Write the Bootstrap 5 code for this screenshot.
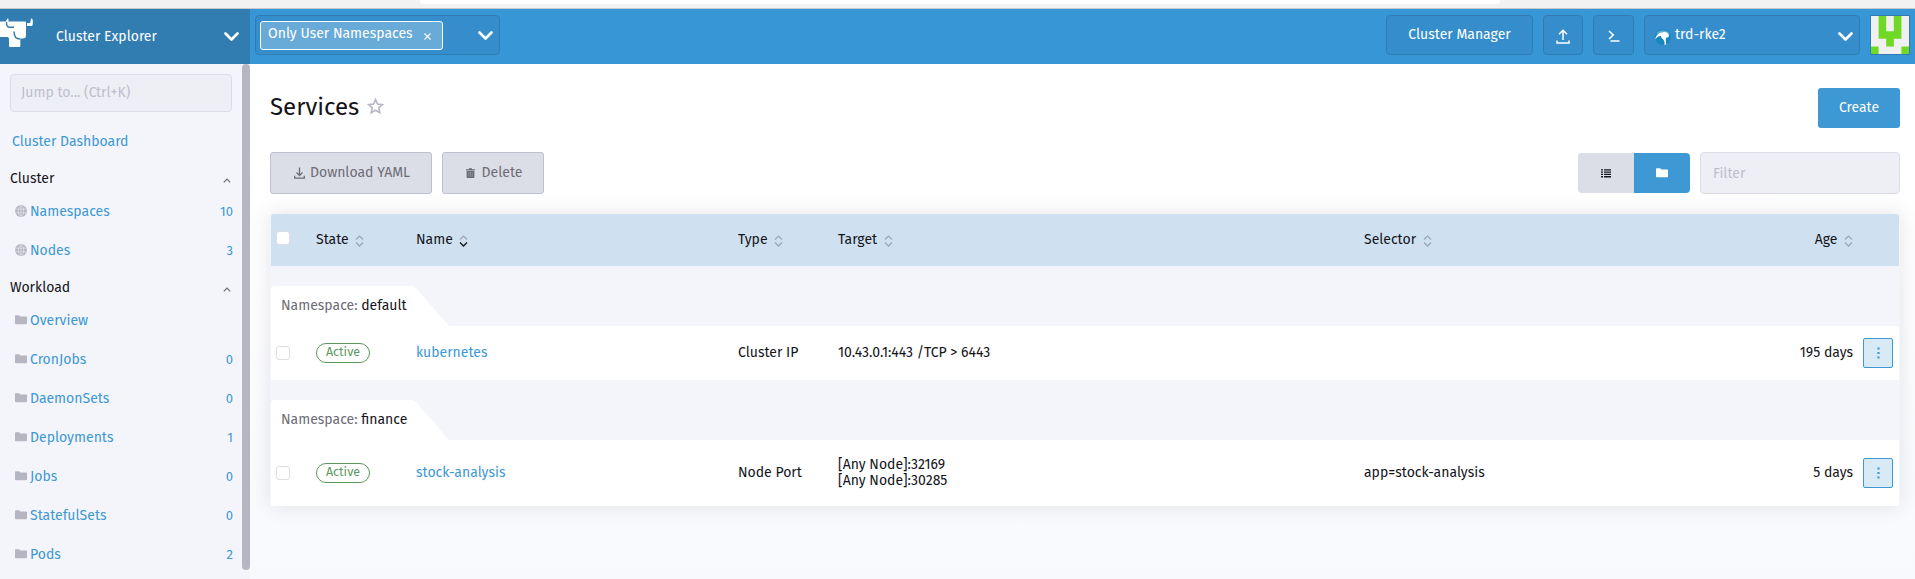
<!DOCTYPE html>
<html lang="en">
<head>
<meta charset="utf-8">
<title>Services</title>
<link href="https://cdn.jsdelivr.net/npm/bootstrap@5.3.0/dist/css/bootstrap.min.css" rel="stylesheet">
<style>
body{font:14px/1.2 "Fira Sans",Roboto,"Noto Sans",sans-serif;color:#141419;height:579px;overflow:hidden;background:#fff}
a{color:#3d98d3;text-decoration:none}
svg{display:block;flex:none}
.strip{height:9px;background:#f2f2f2;border-bottom:1px solid #c9c9cb;padding-left:420px}
.urlbar{width:1080px;height:4px;background:#fff;border-radius:0 0 3px 3px}
.topbar{height:55px;background:#3796d5;color:#fff}
.product{width:250px;background:#317db1;padding-right:11px}
.product span{margin-left:22px;padding-top:1px}
.brand{margin-top:-7px}
.hbox{height:40px;background:#358ecb;border:1px solid #317db1;border-radius:4px;color:#fff;margin-top:6px}
.drop{margin-top:2px}
.chip{height:29px;width:183px;background:#68aad8;border:1px solid #fff;border-radius:3px;padding:0 11px 2px 7px}
.side{width:242px;background:#f4f5fa;padding:10px 9px 0 10px}
.thumb{width:8px;height:506px;background:#b6b6c2;border-radius:4px}
.rail{background:#f4f5fa;width:8px}
.field,.field:focus{background:#eeeff4;border:1px solid #dcdee7;border-radius:4px;font-size:14px;box-shadow:none}
.field::placeholder{color:#bdbece}
.jump{width:222px;height:38px;padding:0 10px 1px}
.dash{height:31px;padding:4px 0 0 2px;margin-top:13px}
.group{height:34px;padding-right:2px}
.group svg{margin-top:3px}
.entries{margin-top:-4px}
.entry{height:39px;padding-left:5px;gap:3px}
.entry svg{margin-top:-1px}
.entry a{padding-top:2px}
.entry span{font-size:13px;color:#3d98d3}
.main{background:linear-gradient(#fff 20%,#f8f9fc);padding:24px 15px 0 20px}
h1{font-size:24px;font-weight:400;line-height:29px}
.btn{font-size:14px;line-height:1.2;border-radius:3px;padding:0}
.btn-create{width:82px;height:40px;background:#3d98d3;color:#fff}
.btn-bulk{height:42px;background:#dcdee7;border:1px solid #bec1d0;color:#6c6c76;gap:5px;padding-left:2px}
.view{width:56px;height:40px;background:#dcdee7}
.view.on{background:#3d98d3}
.view:first-child{border-radius:4px 0 0 4px}
.view:last-child{border-radius:0 4px 4px 0}
.filter{width:200px;height:42px;padding:0 12px}
.sheet{background:#f4f5fa;box-shadow:0 0 20px rgba(60,62,90,.13);margin-top:20px;padding:0 1px;border-radius:4px}
.grid{table-layout:fixed;width:1628px;border-collapse:separate;border-spacing:0}
.grid td,.grid th{padding:0;font-weight:400;vertical-align:middle}
.grid thead th{height:52px;background:#cfe1f0}
.grid thead th:first-child{border-top-left-radius:3px;padding-bottom:4px}
.grid thead th:last-child{border-top-right-radius:3px}
.grid thead div{gap:6.5px}
.item td{background:#fff}
.item td.multi{padding-bottom:1px;line-height:16px}
.r1 td{height:54px}.r2 td{height:66px}
.grp td{height:60px;padding-top:20px}
.tab{width:178px;height:40px;background:#fff;border-top-left-radius:4px;clip-path:polygon(0 0,142px 0,145px 2px,100% 100%,0 100%);padding-left:10px;color:#6c6c76}
.tab b{font-weight:400;color:#141419}
.check{width:14px;height:14px;border:1px solid #dcdee7;border-radius:3px;background:#fff;margin-left:5px}
.state{width:54px;height:20px;border:1px solid #5d995d;border-radius:10px;color:#5d995d;font-size:12.5px;line-height:16px;text-align:center}
.act{width:30px;height:30px;background:#d8eaf6;border:1px solid #3d98d3;border-radius:2px;margin-left:10px}
</style>
</head>
<body>
<svg class="d-none" xmlns="http://www.w3.org/2000/svg">
  <symbol id="chev" viewBox="0 0 15 10"><path d="M1.500 1.500l6 6 6-6" fill="none" stroke="#fff" stroke-width="2.600" stroke-linecap="round" stroke-linejoin="round"/></symbol>
  <symbol id="up" viewBox="0 0 8 5"><path d="M.8 4.300L4 1l3.200 3.300" fill="none" stroke="#6c6c76" stroke-width="1.200"/></symbol>
  <symbol id="folder" viewBox="0 0 12 10"><path d="M0 1a.8.8 0 0 1 .8-.8h3.400L5.400 1.500h5.800a.8.8 0 0 1 .8.800v6.200a.8.800 0 0 1-.8.800H.8A.8.800 0 0 1 0 8.500z" fill="currentColor"/></symbol>
  <symbol id="globe" viewBox="0 0 12 12"><circle cx="6" cy="6" r="5.900" fill="#b6b6c2"/><path d="M6 .8v10.400M1 4.200h10M1 7.800h10" stroke="#f4f5fa" stroke-width=".5"/><ellipse cx="6" cy="6" rx="2.700" ry="5.200" fill="none" stroke="#f4f5fa" stroke-width=".5"/></symbol>
  <symbol id="sort" viewBox="0 0 9 12"><path d="M1 4.500L4.500 1 8 4.500" fill="none" stroke="#98a7b5" stroke-width="1.100"/><path d="M1 7.500L4.500 11 8 7.500" fill="none" stroke="currentColor" stroke-width="1.300"/></symbol>
  <symbol id="dots" viewBox="0 0 3 12"><path d="M.4 .5h2.200v2H.4zM.4 5h2.200v2H.4zM.4 9.500h2.200v2H.4z" fill="#3d98d3"/></symbol>
</svg>

<div class="strip"><div class="urlbar"></div></div>
<header class="topbar d-flex">
  <div class="product d-flex align-items-center">
    <svg class="brand" width="34" height="31" viewBox="0 0 34 31"><path d="M0 3.500h6L7.300.5l1.200.3-.1 2.700H25a1 1 0 0 1 1 1v13c0 2-1 3-3 3h-2.700V28a1 1 0 0 1-1 1H10a1 1 0 0 1-1-1v-7.500l-1-1.500H0z" fill="#fff"/><path d="M6.500 4c0 4 .8 5.300 3 5.300h4.500M14 13.500c0 5 2 7.500 6 7.500" fill="none" stroke="#317db1" stroke-width="1.400"/><path d="M27 5h3.200L31 .5l1.300.2c.8 2.500.8 5-.1 7.300H27z" fill="#fff"/></svg>
    <span class="flex-grow-1">Cluster Explorer</span>
    <svg width="15" height="10"><use href="#chev"/></svg>
  </div>
  <div class="hbox d-flex align-items-center justify-content-between ps-1" style="width:245px;margin-left:5px;padding-right:6px">
    <div class="chip d-flex align-items-center justify-content-between"><span>Only User Namespaces</span><svg width="7" height="7" viewBox="0 0 7 7" class="mt-1"><path d="M.5.5l6 6m0-6l-6 6" stroke="#fff" stroke-width="1.100"/></svg></div>
    <svg class="drop" width="15" height="10"><use href="#chev"/></svg>
  </div>
  <div class="d-flex ms-auto" style="gap:10px;margin-right:5px">
    <div class="hbox d-flex align-items-center justify-content-center" style="width:147px;padding-top:1px">Cluster Manager</div>
    <div class="hbox d-flex align-items-center justify-content-center" style="width:40px"><svg class="drop" width="14" height="15" viewBox="0 0 14 15"><path d="M7 11V1.500M3 5.200l4-4 4 4M1 11.500V14h12v-2.500" fill="none" stroke="#fff" stroke-width="1.500"/></svg></div>
    <div class="hbox d-flex align-items-center justify-content-center" style="width:41px"><svg class="drop" width="12" height="12" viewBox="0 0 12 12"><path d="M1 1l4.200 4L1 9" fill="none" stroke="#fff" stroke-width="1.600"/><path d="M2.500 11h9" stroke="#fff" stroke-width="1.500"/></svg></div>
    <div class="hbox d-flex align-items-center" style="width:216px;padding:1px 6px 0 10px">
      <svg class="drop" width="16" height="16" viewBox="0 0 16 16"><circle cx="8" cy="8" r="8" fill="#1787bb"/><path d="M1 5.500a8 8 0 0 1 14 0L8 3z" fill="#5aaed5"/><path d="M.2 10.500C1 6 4.300 3.300 8 3.200c3.500-.6 6 1.600 5.900 4-.5 1.500-2.600 1-3.100 2.200-.4 1.500.7 3.800.3 6.100l-1.600.5c.5-3.500-.7-5.800-2.700-6.800L5.600 6.800C3.500 7.200 1.700 8.300.2 10.500z" fill="#fff"/></svg>
      <span class="flex-grow-1 ms-1">trd-rke2</span>
      <svg class="drop" width="15" height="10"><use href="#chev"/></svg>
    </div>
    <svg width="40" height="40" viewBox="0 0 40 40" style="margin-top:6px"><path d="M0 0h40v40H0z" fill="#317db1"/><path d="M1 1h38v38H1z" fill="#f0f0f0"/><path d="M8.600 1h7.600v15.200h7.600V1h7.600v22.800h-7.600v7.600h-7.600v-7.600H8.600zM1 31.400h7.600V39H1zM31.400 31.400H39V39h-7.600z" fill="#6fd925"/></svg>
  </div>
</header>

<div class="d-flex" style="height:515px">
  <nav class="side">
    <input class="form-control field jump" placeholder="Jump to... (Ctrl+K)">
    <div class="dash d-flex align-items-center"><a href="#">Cluster Dashboard</a></div>
    <div class="group d-flex align-items-center justify-content-between" style="margin-top:6px"><span>Cluster</span><svg width="8" height="5"><use href="#up"/></svg></div>
    <div id="cluster" class="entries"></div>
    <div class="group d-flex align-items-center justify-content-between" style="margin-top:1px"><span>Workload</span><svg width="8" height="5"><use href="#up"/></svg></div>
    <div id="workload" class="entries"></div>
  </nav>
  <div class="rail"><div class="thumb"></div></div>
  <main class="main flex-grow-1">
    <div class="d-flex justify-content-between">
      <div class="d-flex" style="gap:8px"><h1 class="m-0" style="padding-top:5px">Services</h1>
        <svg width="17" height="17" viewBox="0 0 17 17" style="margin-top:10px"><path d="M8.500 1.600l2 4.500 4.900.5-3.700 3.300 1.100 4.800-4.300-2.500-4.300 2.500 1.100-4.800L1.600 6.600l4.900-.5z" fill="none" stroke="#b6b6c2" stroke-width="1.600"/></svg></div>
      <button class="btn btn-create">Create</button>
    </div>
    <div class="d-flex align-items-center" style="margin-top:24px;gap:10px">
      <button class="btn btn-bulk d-flex align-items-center justify-content-center" style="width:162px"><svg width="11" height="12" viewBox="0 0 11 12"><path d="M5.500.5v8M2.500 5.500l3 3 3-3M.7 8.800v2.400h9.600V8.800" fill="none" stroke="#6c6c76" stroke-width="1.300"/></svg>Download YAML</button>
      <button class="btn btn-bulk d-flex align-items-center justify-content-center" style="width:102px;gap:7px"><svg width="9" height="10" viewBox="0 0 9 10"><path d="M0 1.200h3V.2h3v1h3v1H0zM.6 2.700h7.800V9.200a.8.8 0 0 1-.8.8H1.400a.8.8 0 0 1-.8-.8z" fill="#6c6c76"/><path d="M2.800 3.800v5M4.500 3.800v5M6.200 3.800v5" stroke="#a3a4ae" stroke-width=".6"/></svg>Delete</button>
      <div class="d-flex ms-auto">
        <div class="view d-flex align-items-center justify-content-center"><svg width="10" height="9" viewBox="0 0 10 9"><path d="M0 .2h2v1.300H0zM3 .2h7v1.300H3zM0 2.500h2v1.300H0zM3 2.500h7v1.300H3zM0 4.800h2v1.300H0zM3 4.800h7v1.300H3zM0 7.100h2v1.300H0zM3 7.100h7v1.300H3z" fill="#141419"/></svg></div>
        <div class="view on text-white d-flex align-items-center justify-content-center"><svg width="12" height="10"><use href="#folder"/></svg></div>
      </div>
      <input class="form-control field filter" placeholder="Filter">
    </div>
    <div class="sheet">
      <table class="grid">
        <colgroup><col width="45"><col width="100"><col width="322"><col width="100"><col width="526"><col width="354"><col width="135"><col width="46"></colgroup>
        <thead><tr id="head"></tr></thead>
        <tbody>
          <tr class="grp"><td colspan="8"><div class="tab d-flex align-items-center"><span>Namespace: <b>default</b></span></div></td></tr>
          <tr class="item r1"><td><div class="check"></div></td><td><div class="state">Active</div></td><td><a href="#">kubernetes</a></td><td>Cluster IP</td><td>10.43.0.1:443 /TCP &gt; 6443</td><td></td><td class="text-end">195 days</td><td><div class="act d-flex align-items-center justify-content-center"><svg width="3" height="12"><use href="#dots"/></svg></div></td></tr>
          <tr class="grp"><td colspan="8"><div class="tab d-flex align-items-center"><span>Namespace: <b>finance</b></span></div></td></tr>
          <tr class="item r2"><td><div class="check"></div></td><td><div class="state">Active</div></td><td><a href="#">stock-analysis</a></td><td>Node Port</td><td class="multi">[Any Node]:32169<br>[Any Node]:30285</td><td>app=stock-analysis</td><td class="text-end">5 days</td><td><div class="act d-flex align-items-center justify-content-center"><svg width="3" height="12"><use href="#dots"/></svg></div></td></tr>
        </tbody>
      </table>
    </div>
  </main>
</div>
<script src="https://cdn.jsdelivr.net/npm/bootstrap@5.3.0/dist/js/bootstrap.bundle.min.js"></script>
<script>
const entry=(icon,h)=>([name,count])=>`<div class="entry d-flex align-items-center"><svg width="12" height="${h}" style="color:#b6b6c2"><use href="#${icon}"/></svg><a href="#" class="flex-grow-1">${name}</a><span>${count}</span></div>`;
document.getElementById('cluster').innerHTML=[['Namespaces',10],['Nodes',3]].map(entry('globe',12)).join('');
document.getElementById('workload').innerHTML=[['Overview',''],['CronJobs',0],['DaemonSets',0],['Deployments',1],['Jobs',0],['StatefulSets',0],['Pods',2]].map(entry('folder',10)).join('');
document.getElementById('head').innerHTML='<th><div class="check"></div></th>'+['State','Name','Type','Target','Selector','Age'].map(n=>`<th><div class="d-flex align-items-center ${n=='Age'?'justify-content-end':''}">${n}<svg width="9" height="12" style="margin-top:2px;color:${n=='Name'?'#141419':'#98a7b5'}"><use href="#sort"/></svg></div></th>`).join('')+'<th></th>';
</script>
</body>
</html>
